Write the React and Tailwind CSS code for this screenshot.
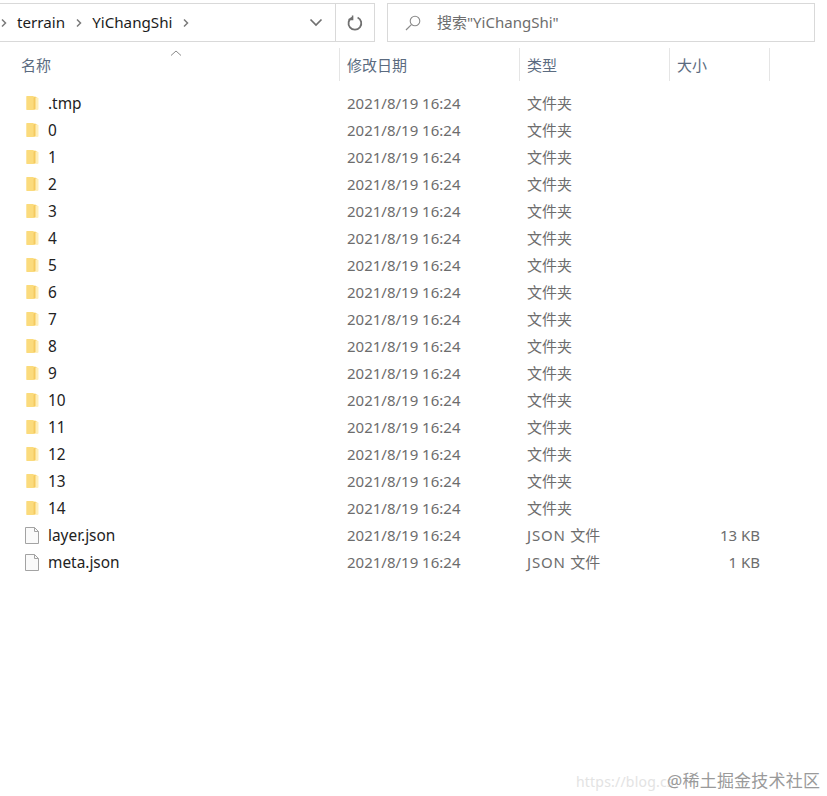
const font = { fontFamily: '"Noto Sans", "Noto Sans CJK SC", sans-serif' };

const rows = [
  ".tmp", "0", "1", "2", "3", "4", "5", "6", "7", "8", "9", "10", "11", "12", "13", "14",
];

const FolderIcon = () => (
  <svg width="13" height="16" viewBox="0 0 13 16" className="ml-[1px] shrink-0">
    <path d="M.5 1.5h8.5l3 1.5v11.5H.5z" fill="#fce08c" />
    <path d="M8 3h4.5v11.5H8z" fill="#feeeb8" />
    <path d="M.5 1h7v14h-7z" fill="#fbdb7c" />
    <path d="M7.5 2.5l2-.8V14l-2 1z" fill="#f5ca5e" />
  </svg>
);

const FileIcon = () => (
  <svg width="14" height="17" viewBox="0 0 14 17" className="shrink-0">
    <path d="M.5.5h9l4 4v12H.5z" fill="#fafafa" stroke="#a3a3a3" />
    <path d="M9.5.5v4h4" fill="none" stroke="#a3a3a3" />
  </svg>
);

const Chevron = () => (
  <svg width="8" height="10" viewBox="0 0 8 10" className="shrink-0">
    <path d="M2 1.5 5.5 5 2 8.5" fill="none" stroke="#7a7a7a" strokeWidth="1.5" />
  </svg>
);

const Row = ({ name, type = "文件夹", size, file }) => (
  <div className="flex h-[27px] items-center text-[15px] text-[#6d6d6d]">
    <div className="flex w-[340px] items-center pl-[25px]">
      {file ? <FileIcon /> : <FolderIcon />}
      <span className="ml-[9px] text-[15.4px] text-[#222222]">{name}</span>
    </div>
    <div className="w-[180px] pl-[7px]">2021/8/19 16:24</div>
    <div className="w-[150px] pl-[7px]">
      {file ? <span className="tracking-[0.8px]">JSON </span> : null}
      {type}
    </div>
    <div className="w-[90px] text-right">{size}</div>
  </div>
);

const Head = ({ className, children }) => (
  <div className={`flex h-[33px] items-center border-r border-[#e5e5e5] pt-[1px] ${className}`}>
    {children}
  </div>
);

export default function App() {
  return (
    <div className="relative h-[796px] w-[827px] overflow-hidden bg-white" style={font}>
      <div className="flex h-[41px] items-start pt-[3px]">
        <div className="flex h-[39px] w-[375px] items-center border border-l-0 border-[#d9d9d9] text-[15.2px] text-[#1c1c1c]">
          <Chevron />
          <span className="ml-[9px]">terrain</span>
          <span className="mx-[9.5px]"><Chevron /></span>
          <span>YiChangShi</span>
          <span className="ml-[9px]"><Chevron /></span>
          <div className="ml-auto flex h-full items-center">
            <svg width="14" height="9" viewBox="0 0 14 9" className="mr-[12px]">
              <path d="M1.5 1.5 7 7l5.5-5.5" fill="none" stroke="#707070" strokeWidth="1.7" />
            </svg>
            <div className="flex h-full w-[39px] items-center justify-center border-l border-[#d9d9d9]">
              <svg width="16" height="16" viewBox="0 0 16 16">
                <path d="M5 2.6a6.4 6.4 0 1 0 5.6-.1" fill="none" stroke="#707070" strokeWidth="1.8" />
                <path d="M5.6 .4v4.2H1.6" fill="none" stroke="#707070" strokeWidth="1.5" />
              </svg>
            </div>
          </div>
        </div>
        <div className="ml-[12px] flex h-[39px] w-[428px] items-center border border-[#d9d9d9] pl-[17px] text-[15px] text-[#6d6d6d]">
          <svg width="16" height="16" viewBox="0 0 16 16">
            <circle cx="10" cy="6" r="4.8" fill="none" stroke="#8a8a8a" strokeWidth="1.1" />
            <path d="M6.4 9.6 1 15" fill="none" stroke="#8a8a8a" strokeWidth="1.2" />
          </svg>
          <span className="ml-[16px]">搜索"YiChangShi"</span>
        </div>
      </div>

      <div className="relative mt-[7px] flex text-[15px] text-[#5b6b80]">
        <Head className="w-[340px] pl-[21px]">名称</Head>
        <Head className="w-[180px] pl-[7px]">修改日期</Head>
        <Head className="w-[150px] pl-[7px]">类型</Head>
        <Head className="w-[100px] pl-[7px]">大小</Head>
        <svg width="12" height="6" viewBox="0 0 12 6" className="absolute left-[170px] top-[2px]">
          <path d="M1 5.5 6 1l5 4.5" fill="none" stroke="#8a8a8a" strokeWidth="1" />
        </svg>
      </div>

      <div className="mt-[9px]">
        {rows.map((name) => (
          <Row key={name} name={name} />
        ))}
        <Row name="layer.json" type="文件" size="13 KB" file />
        <Row name="meta.json" type="文件" size="1 KB" file />
      </div>

      <div className="absolute left-[576px] top-[771px] text-[14px] tracking-[0.2px] text-[#e3e3e3]">https://blog.cs</div>
      <div className="absolute left-[667px] top-[768px] text-[17px] tracking-[0.2px] text-[#9a9a9a]">@稀土掘金技术社区</div>
    </div>
  );
}
